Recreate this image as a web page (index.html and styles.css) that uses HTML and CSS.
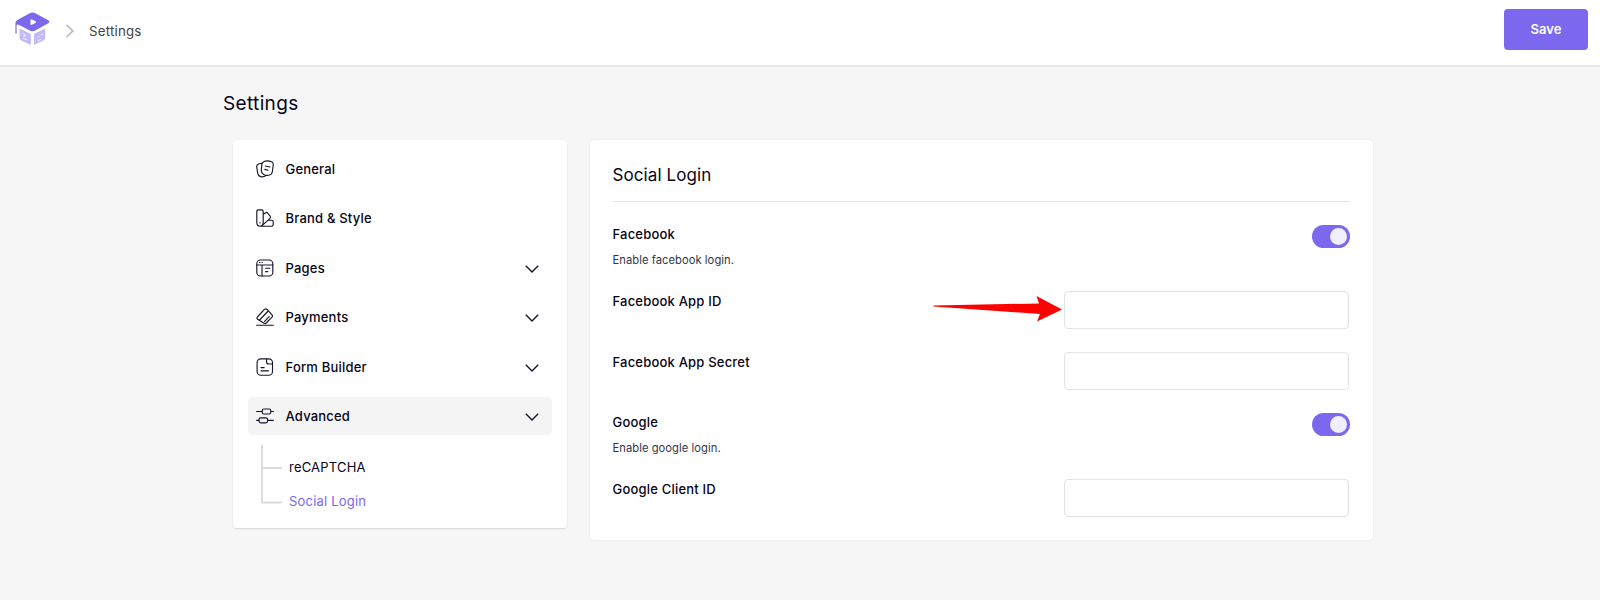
FILE: index.html
```html
<!DOCTYPE html>
<html lang="en">
<head>
<meta charset="utf-8">
<title>Settings</title>
<link rel="stylesheet" href="styles.css">
</head>
<body>
<header class="topbar">
  <svg class="logo" width="36" height="36" viewBox="0 0 36 36">
    <path d="M4.6 16.6 15.8 22V33L6.8 28.8Q4.6 27.8 4.6 25.6ZM30.2 16.6 19 22V33L28.2 28.6Q30.2 27.6 30.2 25.4Z" fill="#c3b8f8"/>
    <path d="M7.5 21.2l3.4 2.6-3 .3M7.8 26l4.6 2M22.5 25.4l1.8-.9M22.5 29l3.4-1.6M25.8 23l2.4-1.2" stroke="#f6f4ff" stroke-width="1" fill="none"/>
    <path d="M15.2 1.1Q17.5 0 19.8 1.1L33.2 8.3Q35.4 9.8 33.2 11.3L20.2 18.6Q17.8 20 15.4 18.8L4.2 13Q2 12 1.6 13V21.4H.4V11.5Q.4 9.3 2 8.3Z" fill="#7b68ee"/>
    <path d="M15.5 8.4Q15.5 7 17 7.5L20.6 9.3Q22 10.2 20.4 11L16.8 12.8Q15.4 13.3 15.5 12Z" fill="#fff"/>
  </svg>
  <svg class="crumb-arrow" width="10" height="14" viewBox="0 0 10 14"><path d="M1.6 1 7.8 7 1.6 13" fill="none" stroke="#b9b9b9" stroke-width="1.7"/></svg>
  <span class="crumb">Settings</span>
  <button class="save">Save</button>
</header>
<main class="page">
  <h1 class="page-title">Settings</h1>
  <div class="columns">
    <nav class="card sidebar">
      <a class="item"><svg class="icon" viewBox="0 0 18 18"><path d="M7.6 1.8Q11.5-.2 15.6 1.8 17.6 2.6 17.2 5.1L16.4 11.5Q16 14.4 13.4 15 10.5 16 7.6 14.4 5.2 13.2 5.3 10.4L5.8 4.6Q6 2.6 7.6 1.8ZM5.8 3.2Q.6 3.8.7 6.4L1.6 12.8Q2 15.8 4.6 16.6 7.5 17.6 10.2 15.4M9.4 6l4.6 1M8.8 9.4l3.2.8"/></svg><span>General</span></a>
      <a class="item"><svg class="icon" viewBox="0 0 18 18"><path d="M2.4.8H5.6Q7.2.8 7.2 2.4V13.6Q7.2 17.2 4 17.2.8 17.2.8 13.6V2.4Q.8.8 2.4.8ZM7.2 5.4 9.6 3.8Q10.7 3 11.6 4.2L14.2 7.2Q15 8.4 14 9.4L6.4 16.4M12.2 11.2H15.6Q17.2 11.2 17.2 12.8V15.6Q17.2 17.2 15.6 17.2H4M4 13.6v.4"/></svg><span>Brand &amp; Style</span></a>
      <a class="item"><svg class="icon" viewBox="0 0 18 18"><rect x=".8" y="1" width="16" height="16" rx="3.8"/><path d="M.8 6H16.8M6 6V17M9.6 9.2h4.2M9.6 12.6h2.2M3.5 3.5h.4M6 3.5h.4"/></svg><span>Pages</span><svg class="chev" viewBox="0 0 14 8"><path d="M.8.8 7 7 13.2.8"/></svg></a>
      <a class="item"><svg class="icon" viewBox="0 0 18 18"><path d="M1.4 9 8.4 1.4Q9.8.2 11 1.4L16 6.8Q17 8 16 9.2L10.2 15Q9 16 7.6 15L1.6 11.2Q.4 10.2 1.4 9ZM3.6 12 12.2 3M8.6 13.4l2-2M11.2 10.6l2-2M.6 17.2H17.4"/></svg><span>Payments</span><svg class="chev" viewBox="0 0 14 8"><path d="M.8.8 7 7 13.2.8"/></svg></a>
      <a class="item"><svg class="icon" viewBox="0 0 18 18"><rect x="1.1" y=".8" width="15.4" height="16.4" rx="3.8"/><path d="M10.6 1V4Q10.6 6 12.6 6H16.2M5 9.6h3.2M5 12.8h7.6"/></svg><span>Form Builder</span><svg class="chev" viewBox="0 0 14 8"><path d="M.8.8 7 7 13.2.8"/></svg></a>
      <a class="item active"><svg class="icon" viewBox="0 0 18 18"><rect x="6.2" y="2" width="8.6" height="5" rx="1.8"/><rect x="3" y="10.8" width="8.6" height="5" rx="1.8"/><path d="M.6 4.5H6.2M14.8 4.5H17.4M.6 13.3H3M11.6 13.3H17.4"/></svg><span>Advanced</span><svg class="chev" viewBox="0 0 14 8"><path d="M.8.8 7 7 13.2.8"/></svg></a>
      <div class="submenu">
        <svg class="tree" width="21" height="59" viewBox="0 0 21 59"><path d="M1 0V57.5H21M1 23H21" fill="none" stroke="#d9dadc" stroke-width="1.8"/></svg>
        <div class="links"><a class="sub">reCAPTCHA</a><a class="sub current">Social Login</a></div>
      </div>
    </nav>
    <section class="card panel">
      <h2 class="panel-title">Social Login</h2>
      <div class="row toggle-row"><div><div class="label">Facebook</div><div class="hint">Enable facebook login.</div></div><span class="switch"></span></div>
      <div class="row"><label class="label">Facebook App ID</label>
        <div class="field"><input class="input" type="text"><svg class="pointer" width="130" height="28" viewBox="0 0 130 28"><path d="M.5 10.6 106 8.4 103.5 1 129 14.5 104 26.5 107 19 .5 11.4Z" fill="#f00"/></svg></div></div>
      <div class="row secret-row"><label class="label">Facebook App Secret</label><div class="field"><input class="input" type="text"></div></div>
      <div class="row toggle-row"><div><div class="label">Google</div><div class="hint">Enable google login.</div></div><span class="switch"></span></div>
      <div class="row"><label class="label">Google Client ID</label><div class="field"><input class="input" type="text"></div></div>
    </section>
  </div>
</main>
</body>
</html>
```
FILE: styles.css
```css
* { box-sizing: border-box; }
body { margin: 0; height: 600px; overflow: hidden; background: #f6f6f6; color: #070417; font-family: Inter, "Liberation Sans", sans-serif; font-size: 13px; letter-spacing: .2px; }
.topbar { display: flex; align-items: center; height: 67px; padding: 0 12px 5px 15px; background: #fff; border-bottom: 2px solid #e8e8e8; }
.logo { margin-top: -1px; }
.crumb-arrow { margin: 2px 14px 0 14px; }
.crumb { color: #434343; font-size: 13.3px; letter-spacing: .2px; line-height: 20px; margin-top: 2px; }
.save { margin: -2px 0 0 auto; width: 84px; height: 41px; padding: 0; border: 0; border-radius: 4px; background: #7b68ee; color: #fff; font: 600 13px/20px Inter, sans-serif; }
.page { width: 1150px; margin-left: 223px; }
.page-title { margin: 0; padding-top: 24px; height: 73px; font-size: 19px; letter-spacing: .35px; font-weight: 400; line-height: 26px; }
.columns { display: flex; align-items: flex-start; gap: 23px; padding-left: 10px; }
.card { background: #fff; border-radius: 4px; box-shadow: 0 1px 2px rgba(0, 0, 0, .13); }
.sidebar { width: 334px; height: 388px; padding: 10px 15px; display: flex; flex-direction: column; }
.item { display: flex; flex: none; align-items: center; height: 38px; margin-bottom: 11.4px; padding: 0 13px 0 8px; border-radius: 4px; font-weight: 450; }
.item.active { background: #f4f4f4; }
.icon { width: 18px; height: 18px; margin-right: 11.5px; fill: none; stroke: #17152a; stroke-width: 1.15; stroke-linecap: round; stroke-linejoin: round; }
.chev { width: 14px; height: 8px; margin: 2px 0 0 auto; fill: none; stroke: #17152a; stroke-width: 1.4; }
.submenu { display: flex; gap: 7px; padding-left: 13px; margin-top: -1px; }
.links { display: flex; flex-direction: column; gap: 14px; padding-top: 12px; }
.sub { line-height: 20px; letter-spacing: .2px; }
.current { color: #7b68ee; }
.panel { width: 783px; height: 400px; padding: 0 23px 0 22.5px; box-shadow: 0 0 2px rgba(0, 0, 0, .09); }
.panel-title { height: 62px; margin: 0 0 22px; padding-top: 23px; border-bottom: 1px solid #e3e4e6; font-size: 17px; letter-spacing: .1px; font-weight: 400; line-height: 24px; }
.row { display: flex; justify-content: space-between; height: 61px; }
.toggle-row { height: 67px; }
.secret-row { height: 60px; }
.label { font-weight: 450; line-height: 20px; }
.hint { margin-top: 7px; font-size: 11.2px; letter-spacing: .05px; line-height: 18px; color: #333645; }
.switch { width: 38px; height: 23px; margin-top: 1px; padding: 3px; border-radius: 12px; background: #7b68ee; display: flex; justify-content: flex-end; }
.switch::before { content: ""; width: 17px; height: 17px; border-radius: 50%; background: #f1eefe; }
.field { position: relative; width: 286px; }
.input { display: block; width: 285px; height: 38px; border: 1px solid #e3e3e3; border-radius: 4px; background: #fff; padding: 0 10px; outline: 0; }
.pointer { position: absolute; left: -131px; top: 4px; }
```
